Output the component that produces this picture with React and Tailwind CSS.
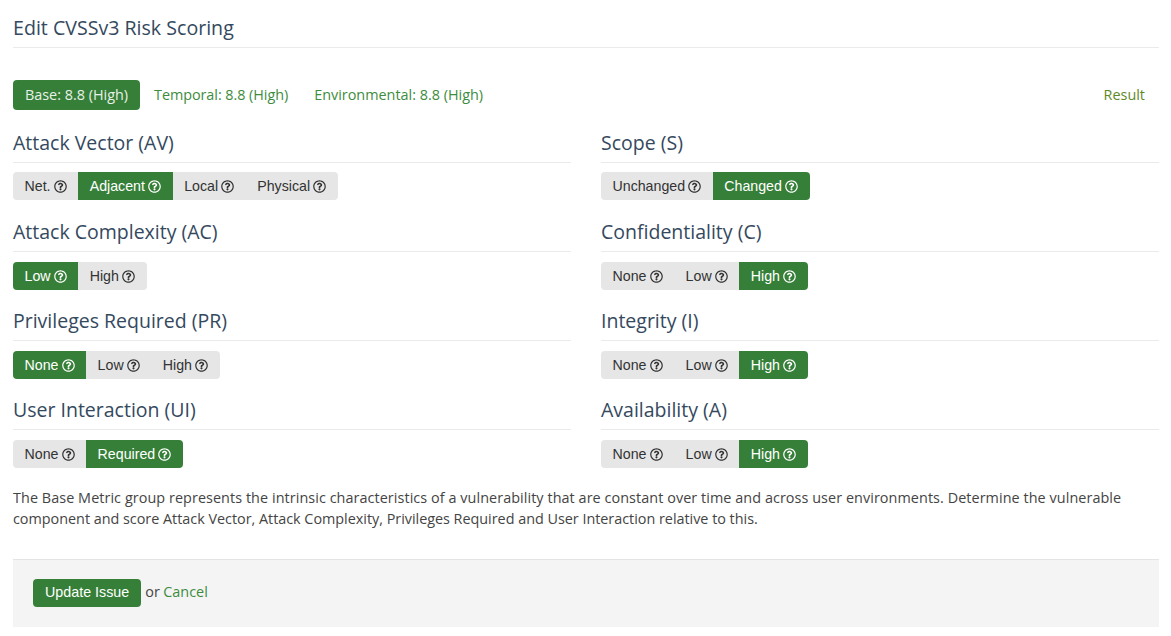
import React from "react";
import { FaRegQuestionCircle } from "react-icons/fa";

const GREEN = "bg-[#367f38]";

function Group({ items, active }) {
  return (
    <div className="flex w-fit rounded-[4px] overflow-hidden font-['Liberation_Sans',sans-serif] text-[14.2px] leading-[20px] h-[28px]">
      {items.map((item, i) => (
        <div
          key={item}
          className={`flex items-center gap-[3.2px] px-[11.5px] ${i === active ? `${GREEN} text-white` : "bg-[#e6e6e6] text-[#333333]"}`}
        >
          <span>{item}</span>
          <FaRegQuestionCircle size={13} />
        </div>
      ))}
    </div>
  );
}

function Metric({ title, items, active, first }) {
  return (
    <div className="h-[89px]">
      <h3 className="text-[19.5px] leading-[26px] text-[#34495e] pb-[6px] border-b border-[#eaeaea] h-[33px]">{title}</h3>
      <div className={first ? "mt-[9px]" : "mt-[10px]"}>
        <Group items={items} active={active} />
      </div>
    </div>
  );
}

export default function App() {
  const nlh = ["None", "Low", "High"];
  return (
    <div className="h-[636px] bg-white pl-[13px] pr-[12px] font-['Open_Sans',sans-serif] text-[14.4px] text-[#444444] overflow-hidden">
      <div className="pt-[14px] h-[48px] border-b border-[#eaeaea]">
        <h2 className="text-[19.6px] leading-[27px] text-[#34495e]">Edit CVSSv3 Risk Scoring</h2>
      </div>
      <div className="mt-[32px] flex items-center h-[30px] text-[#3d8c40]">
        <div className={`${GREEN} text-[#e8f1e8] rounded-[4px] h-[30px] w-[127px] pb-[1px] flex items-center justify-center`}>Base: 8.8 (High)</div>
        <span className="ml-[14px] pb-[1px] tracking-[-0.05px]">Temporal: 8.8 (High)</span>
        <span className="ml-[26px] pb-[1px]">Environmental: 8.8 (High)</span>
        <span className="ml-auto mr-[14px] pb-[1px] text-[#5f8a1f]">Result</span>
      </div>
      <div className="mt-[20px] grid grid-cols-2 gap-x-[30px]">
        <div>
          <Metric first title="Attack Vector (AV)" items={["Net.", "Adjacent", "Local", "Physical"]} active={1} />
          <Metric title="Attack Complexity (AC)" items={["Low", "High"]} active={0} />
          <Metric title="Privileges Required (PR)" items={nlh} active={0} />
          <Metric title="User Interaction (UI)" items={["None", "Required"]} active={1} />
        </div>
        <div>
          <Metric first title="Scope (S)" items={["Unchanged", "Changed"]} active={1} />
          <Metric title="Confidentiality (C)" items={nlh} active={2} />
          <Metric title="Integrity (I)" items={nlh} active={2} />
          <Metric title="Availability (A)" items={nlh} active={2} />
        </div>
      </div>
      <p className="mt-[1px] leading-[21px] text-[#444444]">
        <span className="block whitespace-nowrap tracking-[0.065px]">The Base Metric group represents the intrinsic characteristics of a vulnerability that are constant over time and across user environments. Determine the vulnerable</span>
        <span className="block whitespace-nowrap tracking-[-0.02px]">component and score Attack Vector, Attack Complexity, Privileges Required and User Interaction relative to this.</span>
      </p>
      <div className="mt-[30px] h-[68px] bg-[#f4f4f4] border-t border-[#e4e4e4] pl-[20px] pb-[2px] flex items-center">
        <div className={`${GREEN} text-white rounded-[4px] h-[28px] px-[12px] flex items-center font-['Liberation_Sans',sans-serif] text-[14.3px]`}>Update Issue</div>
        <span className="ml-[4px] text-[#444444] pb-[2px]">or</span>
        <span className="ml-[3.5px] text-[#3d8c40] pb-[2px]">Cancel</span>
      </div>
    </div>
  );
}
